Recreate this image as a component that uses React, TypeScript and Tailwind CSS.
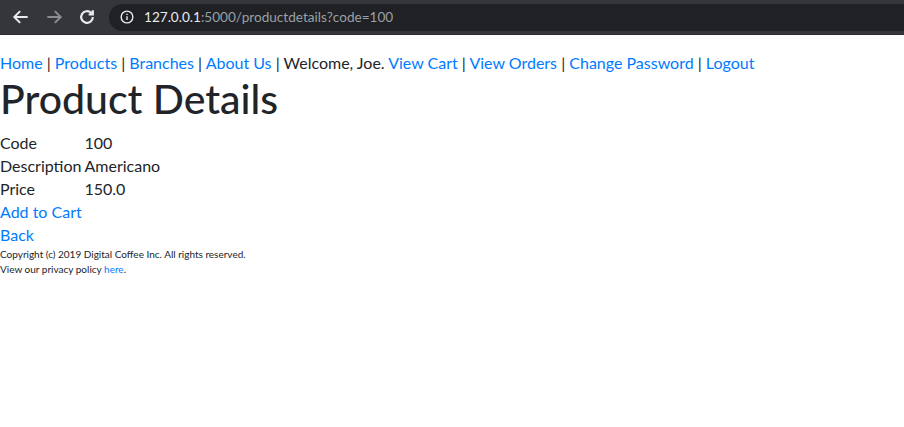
import React from 'react'

const font = { fontFamily: 'Lato, "Noto Sans", sans-serif' }

function BrowserBar() {
  return (
    <div className="flex h-[35px] items-center bg-[#35363a] border-b border-[#2a2b2e]">
      <div className="flex items-center gap-[13px] pl-[11px] pr-[12px]">
        <svg width="20" height="20" viewBox="0 0 24 24" fill="none" stroke="#e8eaed" strokeWidth="2.4">
          <path d="M20 12H5M11 5l-7 7 7 7" />
        </svg>
        <svg width="20" height="20" viewBox="0 0 24 24" fill="none" stroke="#8b8c8f" strokeWidth="2.4">
          <path d="M4 12h15M13 5l7 7-7 7" />
        </svg>
        <svg width="20" height="20" viewBox="0 0 24 24" fill="none" stroke="#e8eaed" strokeWidth="2.6">
          <path d="M19 12a7 7 0 1 1-2.1-5" />
          <path d="M19 4v5h-5" fill="#e8eaed" />
        </svg>
      </div>
      <div className="flex h-[27px] flex-1 items-center rounded-l-full bg-[#202124] pl-[11px] text-[13.6px]">
        <svg width="14" height="14" viewBox="0 0 16 16" fill="none" stroke="#e8eaed" strokeWidth="1.6">
          <circle cx="8" cy="8" r="6.7" />
          <path d="M8 7v4.5M8 4.3v1.4" />
        </svg>
        <span className="ml-[10px] text-[#e8eaed]">127.0.0.1</span>
        <span className="text-[#9aa0a6]">:5000/productdetails?code=100</span>
      </div>
    </div>
  )
}

export default function App() {
  return (
    <div className="min-h-[427px] bg-white text-[#212529]" style={font}>
      <BrowserBar />
      <div className="pt-[16px] text-[16px] leading-[24px]">
        <div>
          <a className="text-[#007bff]">Home</a> | <a className="text-[#007bff]">Products</a> |{' '}
          <a className="text-[#007bff]">Branches</a> | <a className="text-[#007bff]">About Us</a> | Welcome, Joe.{' '}
          <a className="text-[#007bff]">View Cart</a> | <a className="text-[#007bff]">View Orders</a> |{' '}
          <a className="text-[#007bff]">Change Password</a> | <a className="text-[#007bff]">Logout</a>
        </div>
        <h1 className="mb-[8px] text-[41px] font-medium leading-[48px]">Product Details</h1>
        <table className="border-collapse leading-[23px]">
          <tbody>
            <tr>
              <td className="pr-[3px]">Code</td>
              <td>100</td>
            </tr>
            <tr>
              <td className="pr-[3px]">Description</td>
              <td>Americano</td>
            </tr>
            <tr>
              <td className="pr-[3px]">Price</td>
              <td>150.0</td>
            </tr>
          </tbody>
        </table>
        <div className="leading-[23px]">
          <a className="text-[#007bff]">Add to Cart</a>
        </div>
        <div className="leading-[23px]">
          <a className="text-[#007bff]">Back</a>
        </div>
        <div className="pt-[1px] text-[10px] leading-[15px]">
          Copyright (c) 2019 Digital Coffee Inc. All rights reserved.
          <br />
          View our privacy policy <a className="text-[#007bff]">here</a>.
        </div>
      </div>
    </div>
  )
}
